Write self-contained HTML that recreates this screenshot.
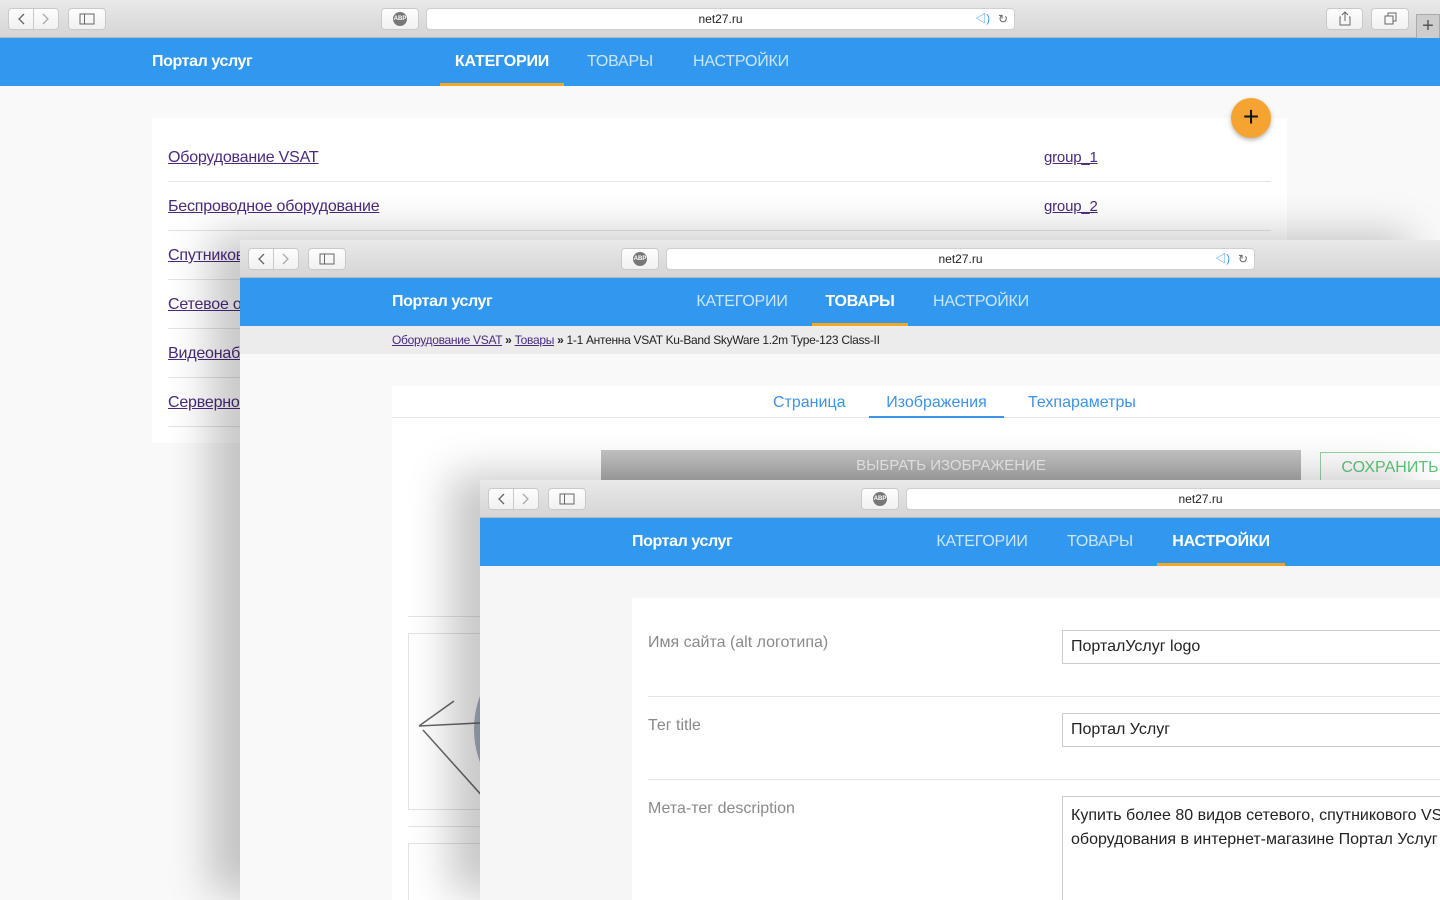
<!DOCTYPE html>
<html><head><meta charset="utf-8"><style>
*{box-sizing:border-box;margin:0;padding:0}
html,body{width:1440px;height:900px;overflow:hidden}
body{position:relative;background:#f9f9f9;font-family:"Liberation Sans","Noto Sans CJK SC",sans-serif}
.win{position:absolute;right:0;bottom:0;background:#f9f9f9;overflow:hidden}
.w2,.w3{box-shadow:-30px -6px 40px rgba(0,0,0,.22)}
.tb{position:absolute;left:0;top:0;right:0;height:38px;background:linear-gradient(#e9e9e9,#d5d5d5);border-bottom:1px solid #b9b9b9}
.btn{position:absolute;top:8px;height:22px;background:linear-gradient(#fdfdfd,#f1f1f1);border:1px solid #c9c9c9;border-radius:4px}
.url{position:absolute;top:8px;height:22px;background:#fff;border:1px solid #cfcfcf;border-radius:4px;font-size:12px;color:#222;text-align:center;line-height:20px}
.abp{position:absolute;left:11px;top:3px;width:14px;height:14px;border-radius:50%;background:#777;color:#fff;font-size:6px;font-weight:bold;line-height:14px;text-align:center}
.nav{position:absolute;left:0;right:0;top:38px;height:48px;background:#3298ef}
.brand{position:absolute;left:152px;top:15px;color:#fff;font-weight:bold;font-size:16px;letter-spacing:-.4px}
.tab{position:absolute;top:0;height:48px;line-height:48px;color:rgba(255,255,255,.75);font-size:16px;text-align:center;letter-spacing:-.2px}
.tab.a{color:#fff;font-weight:bold;border-bottom:3px solid #f5a623}
a{color:#4b2a7c;text-decoration:underline}
.row{height:49px;border-bottom:1px solid #e4e4e4;position:relative}
.row a{position:absolute;top:16px;font-size:16px;letter-spacing:-.2px}
.row a.g{left:876px;font-size:15px}
</style></head><body>

<!-- window 1 -->
<div class="win" style="left:0;top:0">
 <div class="tb">
  <div class="btn" style="left:8px;width:26px;border-radius:4px 0 0 4px"><svg width="24" height="20"><path d="M15 5l-5 5 5 5" stroke="#666" fill="none" stroke-width="1.3"/></svg></div>
  <div class="btn" style="left:33px;width:26px;border-radius:0 4px 4px 0"><svg width="24" height="20"><path d="M9 5l5 5-5 5" stroke="#aaa" fill="none" stroke-width="1.3"/></svg></div>
  <div class="btn" style="left:68px;width:38px"><svg width="36" height="20"><rect x="11" y="5" width="14" height="10" stroke="#666" fill="none"/><line x1="15.5" y1="5" x2="15.5" y2="15" stroke="#666"/></svg></div>
  <div class="btn" style="left:381px;width:38px"><div class="abp">ABP</div></div>
  <div class="url" style="left:426px;width:589px">net27.ru<span style="position:absolute;right:24px;color:#3a8ee6;font-size:11px">◁)</span><span style="position:absolute;right:6px;color:#666">↻</span></div>
  <div class="btn" style="left:1326px;width:37px"><svg width="36" height="20"><path d="M18 3v9M15 6l3-3 3 3M14 8h-1v8h10V8h-1" stroke="#666" fill="none"/></svg></div>
  <div class="btn" style="left:1371px;width:38px"><svg width="36" height="20"><rect x="13" y="7" width="8" height="8" stroke="#666" fill="none"/><path d="M16 7V4h8v8h-3" stroke="#666" fill="none"/></svg></div>
  <div style="position:absolute;left:1416px;top:14px;width:24px;height:24px;background:#cdcdcd;border:1px solid #aaa;border-bottom:0;color:#555;font-size:20px;text-align:center;line-height:22px">+</div>
 </div>
 <div class="nav">
  <div class="brand">Портал услуг</div>
  <div class="tab a" style="left:440px;width:124px">КАТЕГОРИИ</div>
  <div class="tab" style="left:572px;width:96px">ТОВАРЫ</div>
  <div class="tab" style="left:677px;width:128px">НАСТРОЙКИ</div>
 </div>
 <div style="position:absolute;left:152px;top:118px;width:1135px;height:325px;background:#fff">
  <div style="position:absolute;left:16px;right:16px;top:15px">
   <div class="row"><a>Оборудование VSAT</a><a class="g">group_1</a></div>
   <div class="row"><a>Беспроводное оборудование</a><a class="g">group_2</a></div>
   <div class="row"><a>Спутниковое</a></div>
   <div class="row"><a>Сетевое оборудование</a></div>
   <div class="row"><a>Видеонаблюдение</a></div>
   <div class="row"><a>Серверное</a></div>
  </div>
 </div>
 <div style="position:absolute;left:1231px;top:98px;width:40px;height:40px;border-radius:50%;background:#f5a431;box-shadow:0 2px 5px rgba(0,0,0,.3);text-align:center;line-height:38px;font-size:28px;color:#111">+</div>
</div>

<!-- window 2 -->
<div class="win w2" style="left:240px;top:240px">
 <div class="tb">
  <div class="btn" style="left:8px;width:26px;border-radius:4px 0 0 4px"><svg width="24" height="20"><path d="M15 5l-5 5 5 5" stroke="#666" fill="none" stroke-width="1.3"/></svg></div>
  <div class="btn" style="left:33px;width:26px;border-radius:0 4px 4px 0"><svg width="24" height="20"><path d="M9 5l5 5-5 5" stroke="#aaa" fill="none" stroke-width="1.3"/></svg></div>
  <div class="btn" style="left:68px;width:38px"><svg width="36" height="20"><rect x="11" y="5" width="14" height="10" stroke="#666" fill="none"/><line x1="15.5" y1="5" x2="15.5" y2="15" stroke="#666"/></svg></div>
  <div class="btn" style="left:381px;width:38px"><div class="abp">ABP</div></div>
  <div class="url" style="left:426px;width:589px">net27.ru<span style="position:absolute;right:24px;color:#3a8ee6;font-size:11px">◁)</span><span style="position:absolute;right:6px;color:#666">↻</span></div>
 </div>
 <div class="nav">
  <div class="brand">Портал услуг</div>
  <div class="tab" style="left:440px;width:124px">КАТЕГОРИИ</div>
  <div class="tab a" style="left:572px;width:96px">ТОВАРЫ</div>
  <div class="tab" style="left:677px;width:128px">НАСТРОЙКИ</div>
 </div>
 <div style="position:absolute;left:0;right:0;top:86px;height:28px;background:#ececec;font-size:12px;line-height:29px;padding-left:152px;color:#222;letter-spacing:-.3px;white-space:nowrap"><a>Оборудование VSAT</a> <b>»</b> <a>Товары</a> <b>»</b> 1-1 Антенна VSAT Ku-Band SkyWare 1.2m Type-123 Class-II</div>
 <div style="position:absolute;left:152px;right:0;top:146px;bottom:0;background:#fff;overflow:hidden">
  <div style="position:absolute;left:0;right:0;top:0;height:32px;border-bottom:1px solid #e4e4e4"></div>
  <div style="position:absolute;left:381px;top:8px;color:#3d93e8;font-size:16px">Страница</div>
  <div style="position:absolute;left:477px;top:8px;width:135px;height:24px;border-bottom:2px solid #3d93e8;color:#3d93e8;font-size:16px;text-align:center">Изображения</div>
  <div style="position:absolute;left:636px;top:8px;color:#3d93e8;font-size:16px">Техпараметры</div>
  <div style="position:absolute;left:209px;top:64px;width:700px;height:32px;background:linear-gradient(#c4c4c4,#acacac);color:#eee;font-size:15px;text-align:center;line-height:32px">ВЫБРАТЬ ИЗОБРАЖЕНИЕ</div>
  <div style="position:absolute;left:928px;top:66px;width:140px;height:32px;border:1px solid #8fd6a0;color:#5fc77a;font-size:16px;text-align:center;line-height:30px">СОХРАНИТЬ</div>
  <div style="position:absolute;left:16px;right:0;top:230px;border-top:1px solid #e4e4e4"></div>
  <div style="position:absolute;left:16px;top:247px;width:200px;height:177px;border:1px solid #e4e4e4">
   <svg width="200" height="177"><ellipse cx="115" cy="95" rx="50" ry="70" fill="#a9b3c4"/><path d="M10 92l35 -25M10 92l80 -4M14 96l70 78" stroke="#666" stroke-width="1.5"/></svg>
  </div>
  <div style="position:absolute;left:16px;right:0;top:440px;border-top:1px solid #e4e4e4"></div>
  <div style="position:absolute;left:16px;top:457px;width:200px;height:100px;border:1px solid #e4e4e4"></div>
 </div>
</div>

<!-- window 3 -->
<div class="win w3" style="left:480px;top:480px;background:#f6f6f6">
 <div class="tb">
  <div class="btn" style="left:8px;width:26px;border-radius:4px 0 0 4px"><svg width="24" height="20"><path d="M15 5l-5 5 5 5" stroke="#666" fill="none" stroke-width="1.3"/></svg></div>
  <div class="btn" style="left:33px;width:26px;border-radius:0 4px 4px 0"><svg width="24" height="20"><path d="M9 5l5 5-5 5" stroke="#aaa" fill="none" stroke-width="1.3"/></svg></div>
  <div class="btn" style="left:68px;width:38px"><svg width="36" height="20"><rect x="11" y="5" width="14" height="10" stroke="#666" fill="none"/><line x1="15.5" y1="5" x2="15.5" y2="15" stroke="#666"/></svg></div>
  <div class="btn" style="left:381px;width:38px"><div class="abp">ABP</div></div>
  <div class="url" style="left:426px;width:589px">net27.ru</div>
 </div>
 <div class="nav">
  <div class="brand">Портал услуг</div>
  <div class="tab" style="left:440px;width:124px">КАТЕГОРИИ</div>
  <div class="tab" style="left:572px;width:96px">ТОВАРЫ</div>
  <div class="tab a" style="left:677px;width:128px">НАСТРОЙКИ</div>
 </div>
 <div style="position:absolute;left:152px;right:0;top:118px;bottom:0;background:#fff;font-size:16px;overflow:hidden">
  <div style="position:absolute;left:16px;top:36px;color:#8a8a8a">Имя сайта (alt логотипа)</div>
  <div style="position:absolute;left:430px;top:32px;width:400px;height:34px;border:1px solid #ccc;padding:7px 8px;color:#222">ПорталУслуг logo</div>
  <div style="position:absolute;left:16px;right:0;top:98px;border-top:1px solid #e6e6e6"></div>
  <div style="position:absolute;left:16px;top:119px;color:#8a8a8a">Тег title</div>
  <div style="position:absolute;left:430px;top:115px;width:400px;height:34px;border:1px solid #ccc;padding:7px 8px;color:#222">Портал Услуг</div>
  <div style="position:absolute;left:16px;right:0;top:181px;border-top:1px solid #e6e6e6"></div>
  <div style="position:absolute;left:16px;top:202px;color:#8a8a8a">Мета-тег description</div>
  <div style="position:absolute;left:430px;top:198px;width:400px;height:140px;border:1px solid #ccc;padding:7px 8px;color:#222;line-height:24px;white-space:nowrap;overflow:hidden">Купить более 80 видов сетевого, спутникового VSAT<br>оборудования в интернет-магазине Портал Услуг</div>
 </div>
</div>
</body></html>
